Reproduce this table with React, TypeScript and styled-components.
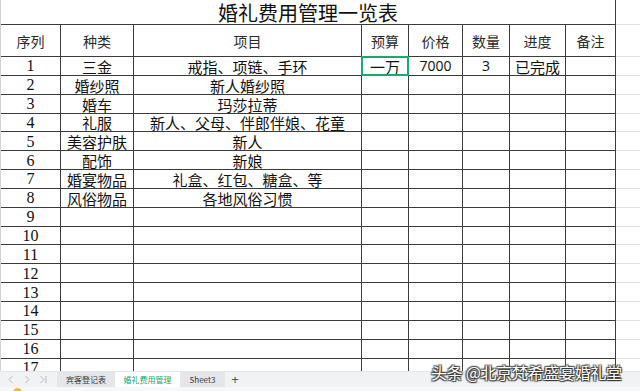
import React from 'react';
import styled, { createGlobalStyle, css } from 'styled-components';

const Global = createGlobalStyle`
  html, body { margin: 0; padding: 0; background: #ffffff; }
  body { width: 640px; height: 391px; overflow: hidden; }
`;

const CJK = `"Noto Sans CJK SC", "Noto Sans", sans-serif`;
const LINE = '#3c3c3c';
const FAINT = '#dde1e6';
const GREEN = '#21a66b';

const Page = styled.div`
  position: relative;
  width: 640px;
  height: 391px;
  overflow: hidden;
  display: flex;
  flex-direction: column;
  font-family: ${CJK};
  color: #111;
`;

const Sheet = styled.div`
  flex: 0 0 371px;
  overflow: hidden;
  display: grid;
  grid-template-columns: 60px 73px 228px 47px 54px 47px 56px 50px 1fr;
  grid-template-rows: 25px 32px repeat(17, 18.85px);
  border-left: 1px solid #cfd3d8;
  box-sizing: border-box;
`;

type Kind = 'title' | 'head' | 'data' | 'extra';

const Cell = styled.div<{ $kind: Kind; $serif?: boolean; $latin?: boolean; $selected?: boolean; $active?: boolean }>`
  position: relative;
  box-sizing: border-box;
  display: flex;
  align-items: center;
  justify-content: center;
  white-space: nowrap;
  overflow: visible;
  line-height: 1;
  font-size: 15px;
  border-right: 1px solid ${LINE};
  border-bottom: 1px solid ${LINE};
  ${(p) =>
    p.$kind === 'title' &&
    css`
      grid-column: 1 / 9;
      font-size: 20px;
      padding-top: 1px;
      color: #111;
    `}
  ${(p) =>
    p.$kind === 'head' &&
    css`
      font-size: 14px;
      color: #2a2a2a;
    `}
  ${(p) =>
    p.$kind === 'data' &&
    css`
      padding-top: 1px;
    `}
  ${(p) =>
    p.$kind === 'extra' &&
    css`
      border-right: none;
      border-bottom: 1px solid ${FAINT};
    `}
  ${(p) =>
    p.$serif &&
    css`
      font-family: "Liberation Serif", serif;
      font-size: 16px;
    `}
  ${(p) =>
    p.$latin &&
    css`
      font-family: "Open Sans", "Liberation Sans", sans-serif;
      font-size: 14px;
    `}
  ${(p) =>
    p.$selected &&
    css`
      &::after {
        content: '';
        position: absolute;
        left: -1px;
        top: -1px;
        right: -1px;
        bottom: -1px;
        border: 2px solid ${GREEN};
      }
    `}
  ${(p) =>
    p.$active &&
    css`
      &::before {
        content: '';
        position: absolute;
        left: -2px;
        top: 0;
        bottom: 0;
        width: 2px;
        background: ${GREEN};
      }
    `}
`;

const TabBar = styled.div`
  flex: 0 0 16px;
  display: flex;
  align-items: stretch;
  background: #f1f2f4;
  border-top: 1px solid #e4e6e9;
  box-sizing: border-box;
`;

const NavGroup = styled.div`
  width: 57px;
  display: flex;
  align-items: center;
  gap: 8px;
  padding-left: 7px;
  box-sizing: border-box;
  color: #b4b8bd;
`;

const Tab = styled.div<{ $active?: boolean; $w: number }>`
  width: ${(p) => p.$w}px;
  display: flex;
  align-items: center;
  justify-content: center;
  font-size: 8px;
  font-family: ${CJK};
  color: ${(p) => (p.$active ? GREEN : '#3a3a3a')};
  background: ${(p) => (p.$active ? '#ffffff' : '#e4e6e9')};
`;

const AddTab = styled.div`
  width: 20px;
  display: flex;
  align-items: center;
  justify-content: center;
  color: #555;
  font-family: "Liberation Sans", sans-serif;
  font-size: 13px;
`;

const StatusBar = styled.div`
  flex: 1;
  background: #f7f8f9;
  position: relative;
  overflow: hidden;
`;

const StatusDot = styled.div`
  position: absolute;
  left: 13px;
  top: 1px;
  width: 9px;
  height: 9px;
  border-radius: 50%;
  background: #f5b82e;
`;

const Watermark = styled.div`
  position: absolute;
  left: 431px;
  top: 360px;
  font-family: ${CJK};
  font-size: 16px;
  color: #ffffff;
  letter-spacing: -0.3px;
  text-shadow: 0 0 1px #222, 1px 1px 1px #333, -1px -1px 1px #555, 1px -1px 1px #555, -1px 1px 1px #555;
  white-space: nowrap;
`;

const Chevron = ({ d }: { d: string }) => (
  <svg width="8" height="9" viewBox="0 0 8 9" fill="none" stroke="currentColor" strokeWidth="1">
    <path d={d} />
  </svg>
);

type Row = { n: number; kind?: string; item?: string; budget?: string; price?: string; qty?: string; progress?: string };

const rows: Row[] = [
  { n: 1, kind: '三金', item: '戒指、项链、手环', budget: '一万', price: '7000', qty: '3', progress: '已完成' },
  { n: 2, kind: '婚纱照', item: '新人婚纱照' },
  { n: 3, kind: '婚车', item: '玛莎拉蒂' },
  { n: 4, kind: '礼服', item: '新人、父母、伴郎伴娘、花童' },
  { n: 5, kind: '美容护肤', item: '新人' },
  { n: 6, kind: '配饰', item: '新娘' },
  { n: 7, kind: '婚宴物品', item: '礼盒、红包、糖盒、等' },
  { n: 8, kind: '风俗物品', item: '各地风俗习惯' },
  ...Array.from({ length: 9 }, (_, i) => ({ n: 9 + i })),
];

const headers = ['序列', '种类', '项目', '预算', '价格', '数量', '进度', '备注'];

export default function App() {
  return (
    <Page>
      <Global />
      <Sheet>
        <Cell $kind="title">婚礼费用管理一览表</Cell>
        <Cell $kind="extra" />
        {headers.map((h) => (
          <Cell key={h} $kind="head">
            {h}
          </Cell>
        ))}
        <Cell $kind="extra" />
        {rows.map((r) => (
          <React.Fragment key={r.n}>
            <Cell $kind="data" $serif $active={r.n === 1}>
              {r.n}
            </Cell>
            <Cell $kind="data">{r.kind}</Cell>
            <Cell $kind="data">{r.item}</Cell>
            <Cell $kind="data" $selected={r.n === 1}>
              {r.budget}
            </Cell>
            <Cell $kind="data" $latin>
              {r.price}
            </Cell>
            <Cell $kind="data" $latin>
              {r.qty}
            </Cell>
            <Cell $kind="data">{r.progress}</Cell>
            <Cell $kind="data" />
            <Cell $kind="extra" />
          </React.Fragment>
        ))}
      </Sheet>
      <TabBar>
        <NavGroup>
          <Chevron d="M5.5 1 L2 4.5 L5.5 8" />
          <Chevron d="M2.5 1 L6 4.5 L2.5 8" />
          <Chevron d="M1.5 1 L5 4.5 L1.5 8 M7 1 V8" />
        </NavGroup>
        <Tab $w={58}>宾客登记表</Tab>
        <Tab $w={65} $active>
          婚礼费用管理
        </Tab>
        <Tab $w={45}>Sheet3</Tab>
        <AddTab>+</AddTab>
      </TabBar>
      <StatusBar>
        <StatusDot />
      </StatusBar>
      <Watermark>头条 @北京梵希盛宴婚礼堂</Watermark>
    </Page>
  );
}
